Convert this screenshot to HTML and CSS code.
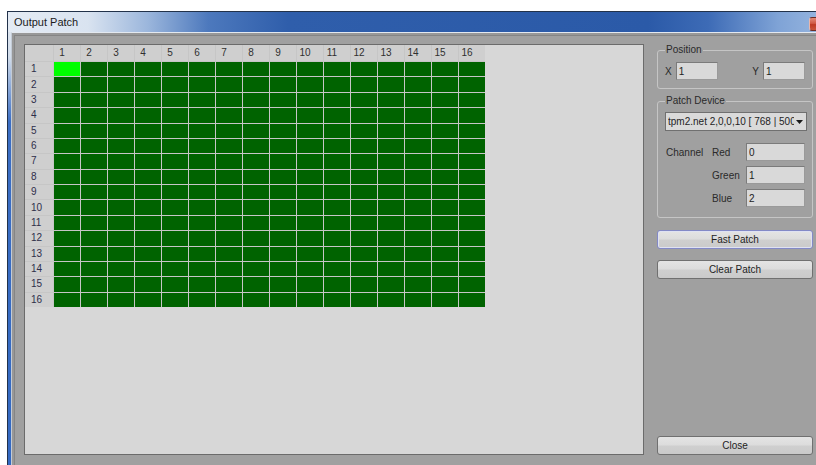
FILE: index.html
```html
<!DOCTYPE html>
<html lang="en">
<head>
<meta charset="utf-8">
<title>Output Patch</title>
<link rel="stylesheet" href="styles.css">
</head>
<body>
<div class="window">
  <div class="titlebar">
    <span class="title">Output Patch</span>
    <span class="close-btn"></span>
  </div>
  <div class="frame">
    <div class="frame-side"></div>
    <div class="frame-inner">
      <div class="client">
        <div class="panel">
          <div class="matrix">
            <div class="corner"></div>
            <div class="colhead">1</div><div class="colhead">2</div><div class="colhead">3</div><div class="colhead">4</div><div class="colhead">5</div><div class="colhead">6</div><div class="colhead">7</div><div class="colhead">8</div><div class="colhead">9</div><div class="colhead">10</div><div class="colhead">11</div><div class="colhead">12</div><div class="colhead">13</div><div class="colhead">14</div><div class="colhead">15</div><div class="colhead">16</div>

            <div class="rowhead">1</div><div class="cell selected"></div><div class="cell"></div><div class="cell"></div><div class="cell"></div><div class="cell"></div><div class="cell"></div><div class="cell"></div><div class="cell"></div><div class="cell"></div><div class="cell"></div><div class="cell"></div><div class="cell"></div><div class="cell"></div><div class="cell"></div><div class="cell"></div><div class="cell"></div>
            <div class="rowhead">2</div><div class="cell"></div><div class="cell"></div><div class="cell"></div><div class="cell"></div><div class="cell"></div><div class="cell"></div><div class="cell"></div><div class="cell"></div><div class="cell"></div><div class="cell"></div><div class="cell"></div><div class="cell"></div><div class="cell"></div><div class="cell"></div><div class="cell"></div><div class="cell"></div>
            <div class="rowhead">3</div><div class="cell"></div><div class="cell"></div><div class="cell"></div><div class="cell"></div><div class="cell"></div><div class="cell"></div><div class="cell"></div><div class="cell"></div><div class="cell"></div><div class="cell"></div><div class="cell"></div><div class="cell"></div><div class="cell"></div><div class="cell"></div><div class="cell"></div><div class="cell"></div>
            <div class="rowhead">4</div><div class="cell"></div><div class="cell"></div><div class="cell"></div><div class="cell"></div><div class="cell"></div><div class="cell"></div><div class="cell"></div><div class="cell"></div><div class="cell"></div><div class="cell"></div><div class="cell"></div><div class="cell"></div><div class="cell"></div><div class="cell"></div><div class="cell"></div><div class="cell"></div>
            <div class="rowhead">5</div><div class="cell"></div><div class="cell"></div><div class="cell"></div><div class="cell"></div><div class="cell"></div><div class="cell"></div><div class="cell"></div><div class="cell"></div><div class="cell"></div><div class="cell"></div><div class="cell"></div><div class="cell"></div><div class="cell"></div><div class="cell"></div><div class="cell"></div><div class="cell"></div>
            <div class="rowhead">6</div><div class="cell"></div><div class="cell"></div><div class="cell"></div><div class="cell"></div><div class="cell"></div><div class="cell"></div><div class="cell"></div><div class="cell"></div><div class="cell"></div><div class="cell"></div><div class="cell"></div><div class="cell"></div><div class="cell"></div><div class="cell"></div><div class="cell"></div><div class="cell"></div>
            <div class="rowhead">7</div><div class="cell"></div><div class="cell"></div><div class="cell"></div><div class="cell"></div><div class="cell"></div><div class="cell"></div><div class="cell"></div><div class="cell"></div><div class="cell"></div><div class="cell"></div><div class="cell"></div><div class="cell"></div><div class="cell"></div><div class="cell"></div><div class="cell"></div><div class="cell"></div>
            <div class="rowhead">8</div><div class="cell"></div><div class="cell"></div><div class="cell"></div><div class="cell"></div><div class="cell"></div><div class="cell"></div><div class="cell"></div><div class="cell"></div><div class="cell"></div><div class="cell"></div><div class="cell"></div><div class="cell"></div><div class="cell"></div><div class="cell"></div><div class="cell"></div><div class="cell"></div>
            <div class="rowhead">9</div><div class="cell"></div><div class="cell"></div><div class="cell"></div><div class="cell"></div><div class="cell"></div><div class="cell"></div><div class="cell"></div><div class="cell"></div><div class="cell"></div><div class="cell"></div><div class="cell"></div><div class="cell"></div><div class="cell"></div><div class="cell"></div><div class="cell"></div><div class="cell"></div>
            <div class="rowhead">10</div><div class="cell"></div><div class="cell"></div><div class="cell"></div><div class="cell"></div><div class="cell"></div><div class="cell"></div><div class="cell"></div><div class="cell"></div><div class="cell"></div><div class="cell"></div><div class="cell"></div><div class="cell"></div><div class="cell"></div><div class="cell"></div><div class="cell"></div><div class="cell"></div>
            <div class="rowhead">11</div><div class="cell"></div><div class="cell"></div><div class="cell"></div><div class="cell"></div><div class="cell"></div><div class="cell"></div><div class="cell"></div><div class="cell"></div><div class="cell"></div><div class="cell"></div><div class="cell"></div><div class="cell"></div><div class="cell"></div><div class="cell"></div><div class="cell"></div><div class="cell"></div>
            <div class="rowhead">12</div><div class="cell"></div><div class="cell"></div><div class="cell"></div><div class="cell"></div><div class="cell"></div><div class="cell"></div><div class="cell"></div><div class="cell"></div><div class="cell"></div><div class="cell"></div><div class="cell"></div><div class="cell"></div><div class="cell"></div><div class="cell"></div><div class="cell"></div><div class="cell"></div>
            <div class="rowhead">13</div><div class="cell"></div><div class="cell"></div><div class="cell"></div><div class="cell"></div><div class="cell"></div><div class="cell"></div><div class="cell"></div><div class="cell"></div><div class="cell"></div><div class="cell"></div><div class="cell"></div><div class="cell"></div><div class="cell"></div><div class="cell"></div><div class="cell"></div><div class="cell"></div>
            <div class="rowhead">14</div><div class="cell"></div><div class="cell"></div><div class="cell"></div><div class="cell"></div><div class="cell"></div><div class="cell"></div><div class="cell"></div><div class="cell"></div><div class="cell"></div><div class="cell"></div><div class="cell"></div><div class="cell"></div><div class="cell"></div><div class="cell"></div><div class="cell"></div><div class="cell"></div>
            <div class="rowhead">15</div><div class="cell"></div><div class="cell"></div><div class="cell"></div><div class="cell"></div><div class="cell"></div><div class="cell"></div><div class="cell"></div><div class="cell"></div><div class="cell"></div><div class="cell"></div><div class="cell"></div><div class="cell"></div><div class="cell"></div><div class="cell"></div><div class="cell"></div><div class="cell"></div>
            <div class="rowhead">16</div><div class="cell"></div><div class="cell"></div><div class="cell"></div><div class="cell"></div><div class="cell"></div><div class="cell"></div><div class="cell"></div><div class="cell"></div><div class="cell"></div><div class="cell"></div><div class="cell"></div><div class="cell"></div><div class="cell"></div><div class="cell"></div><div class="cell"></div><div class="cell"></div>
          </div>
        </div>

        <div class="sidebar">
          <fieldset class="group position">
            <legend>Position</legend>
            <div class="pos-row">
              <label class="pos-field">X <input class="field" value="1"></label>
              <label class="pos-field">Y <input class="field" value="1"></label>
            </div>
          </fieldset>

          <fieldset class="group device">
            <legend>Patch Device</legend>
            <div class="dropdown">
              <span class="dropdown-text">tpm2.net 2,0,0,10 [ 768 | 500 ]</span>
              <svg class="dropdown-arrow" width="7" height="4" viewBox="0 0 7 4"><path d="M0 0h7L3.5 4z" fill="#1a1a1a"/></svg>
            </div>
            <div class="channels">
              <span class="ch-title">Channel</span><span class="ch-label">Red</span><input class="field ch-input" value="0">
              <span></span><span class="ch-label">Green</span><input class="field ch-input" value="1">
              <span></span><span class="ch-label">Blue</span><input class="field ch-input" value="2">
            </div>
          </fieldset>

          <button class="btn btn-focus fast">Fast Patch</button>
          <button class="btn clear">Clear Patch</button>
          <button class="btn close">Close</button>
        </div>
      </div>
    </div>
  </div>
</div>
</body>
</html>
```
FILE: styles.css
```css
html, body {
  margin: 0;
  height: 100%;
  overflow: hidden;
  background: #ffffff;
}

body {
  font-family: "Liberation Sans", Arial, sans-serif;
  font-size: 10px;
  color: #2a2a2a;
}

/* window chrome */
.window {
  margin: 11px 0 0 7px;
  width: 850px;
  border-left: 1px solid #22324a;
  border-top: 1px solid #22324a;
}

.titlebar {
  height: 20px;
  display: flex;
  align-items: center;
  background: linear-gradient(90deg,
    #e4ebf4 0px, #d9e3f0 80px, #9bb6dc 140px, #4d79bd 200px,
    #2f5eab 280px, #2b5aa8 640px, #3d6bb6 700px, #7fa3d6 770px, #a3bfe4 840px);
}

.title {
  padding-left: 6px;
  font-size: 11px;
  color: #1b1b1b;
}

.close-btn {
  align-self: flex-start;
  margin: 5px 6px 0 auto;
  width: 43px;
  height: 14px;
  box-sizing: border-box;
  border: 1px solid #6d2c24;
  border-left-color: #e9b7ad;
  border-radius: 3px;
  background: linear-gradient(#e28a78 0%, #d05a45 45%, #bd3b25 55%, #c9543b 100%);
}

.frame {
  display: flex;
  height: 440px;
}

.frame-side {
  width: 3px;
  background: linear-gradient(#dde5ef 0px, #d2ddeb 25px, #3b6ec4 90px, #3369c2 100%);
}

.frame-inner {
  flex: 1;
  border-top: 1px solid #e4e9f0;
  border-left: 1px solid #c3cbd6;
  padding: 2px 0 0 2px;
  background: #989898;
}

.client {
  display: flex;
  align-items: flex-start;
  gap: 13px;
  height: 100%;
  box-sizing: border-box;
  padding: 8px 0 0 9px;
  border-top: 1px solid #858585;
  border-left: 1px solid #858585;
  background: #a0a0a0;
}

/* patch matrix */
.panel {
  width: 620px;
  height: 411px;
  box-sizing: border-box;
  border: 1px solid #6b6b6b;
  background: #d7d7d7;
}

.matrix {
  display: grid;
  grid-template-columns: 28px repeat(16, 26px);
  grid-template-rows: 16px repeat(16, 1fr);
  gap: 1px;
  width: 460px;
  height: 262px;
  background: #c6c6c6;
}

.corner,
.colhead,
.rowhead {
  background: #cfcfcf;
  font-size: 10px;
  line-height: 1;
  display: flex;
  align-items: center;
}

.colhead {
  justify-content: center;
  padding-right: 10px;
  color: #303030;
}

.rowhead {
  padding-left: 6px;
  color: #2e2e4a;
}

.cell {
  background: #006300;
}

.cell.selected {
  background: #00ff00;
}

/* sidebar controls */
.sidebar {
  width: 156px;
  height: 411px;
  display: flex;
  flex-direction: column;
}

.group {
  margin: 0;
  min-inline-size: 0;
  border: 1px solid #c5c5c5;
  border-radius: 3px;
  padding: 6px 7px 8px 7px;
}

.group legend {
  padding: 0 1px;
  font-size: 10px;
  line-height: 12px;
  color: #2a2a2a;
}

.device {
  margin-top: 6px;
  padding: 5px 7px 10px 7px;
}

.pos-row {
  display: flex;
  justify-content: space-between;
}

.pos-field {
  display: flex;
  align-items: center;
  gap: 4px;
}

.field {
  box-sizing: border-box;
  width: 42px;
  height: 18px;
  margin: 0;
  padding: 0 0 0 2px;
  border: 1px solid #7b7b7b;
  border-right-color: #9a9a9a;
  border-bottom-color: #9a9a9a;
  background: #d9d9d9;
  font-family: "Liberation Sans", Arial, sans-serif;
  font-size: 10px;
  color: #222222;
  outline: none;
}

.dropdown {
  box-sizing: border-box;
  width: 142px;
  height: 19px;
  display: flex;
  align-items: center;
  padding-left: 2px;
  border: 1px solid #707070;
  background: #dadada;
}

.dropdown-text {
  flex: 1;
  overflow: hidden;
  white-space: nowrap;
  color: #1e1e1e;
}

.dropdown-arrow {
  flex: none;
  margin: 1px 3px 0 2px;
}

.channels {
  margin-top: 12px;
  display: grid;
  grid-template-columns: 46px 35px 59px;
  grid-auto-rows: 18px;
  row-gap: 5px;
  align-items: center;
}

.ch-title,
.ch-label {
  padding-left: 1px;
}

.ch-input {
  width: 59px;
}

.btn {
  box-sizing: border-box;
  height: 19px;
  margin: 0;
  padding: 0;
  border: 1px solid #707070;
  border-radius: 3px;
  background: linear-gradient(#e4e4e4 0%, #dcdcdc 48%, #cfcfcf 52%, #cacaca 100%);
  font-family: "Liberation Sans", Arial, sans-serif;
  font-size: 10px;
  color: #1e1e1e;
}

.btn-focus {
  border-color: #8389c6;
  box-shadow: inset 0 0 0 1px #dfe2f2;
}

.fast {
  margin-top: 12px;
}

.clear {
  margin-top: 11px;
}

.close {
  margin-top: auto;
}
```
